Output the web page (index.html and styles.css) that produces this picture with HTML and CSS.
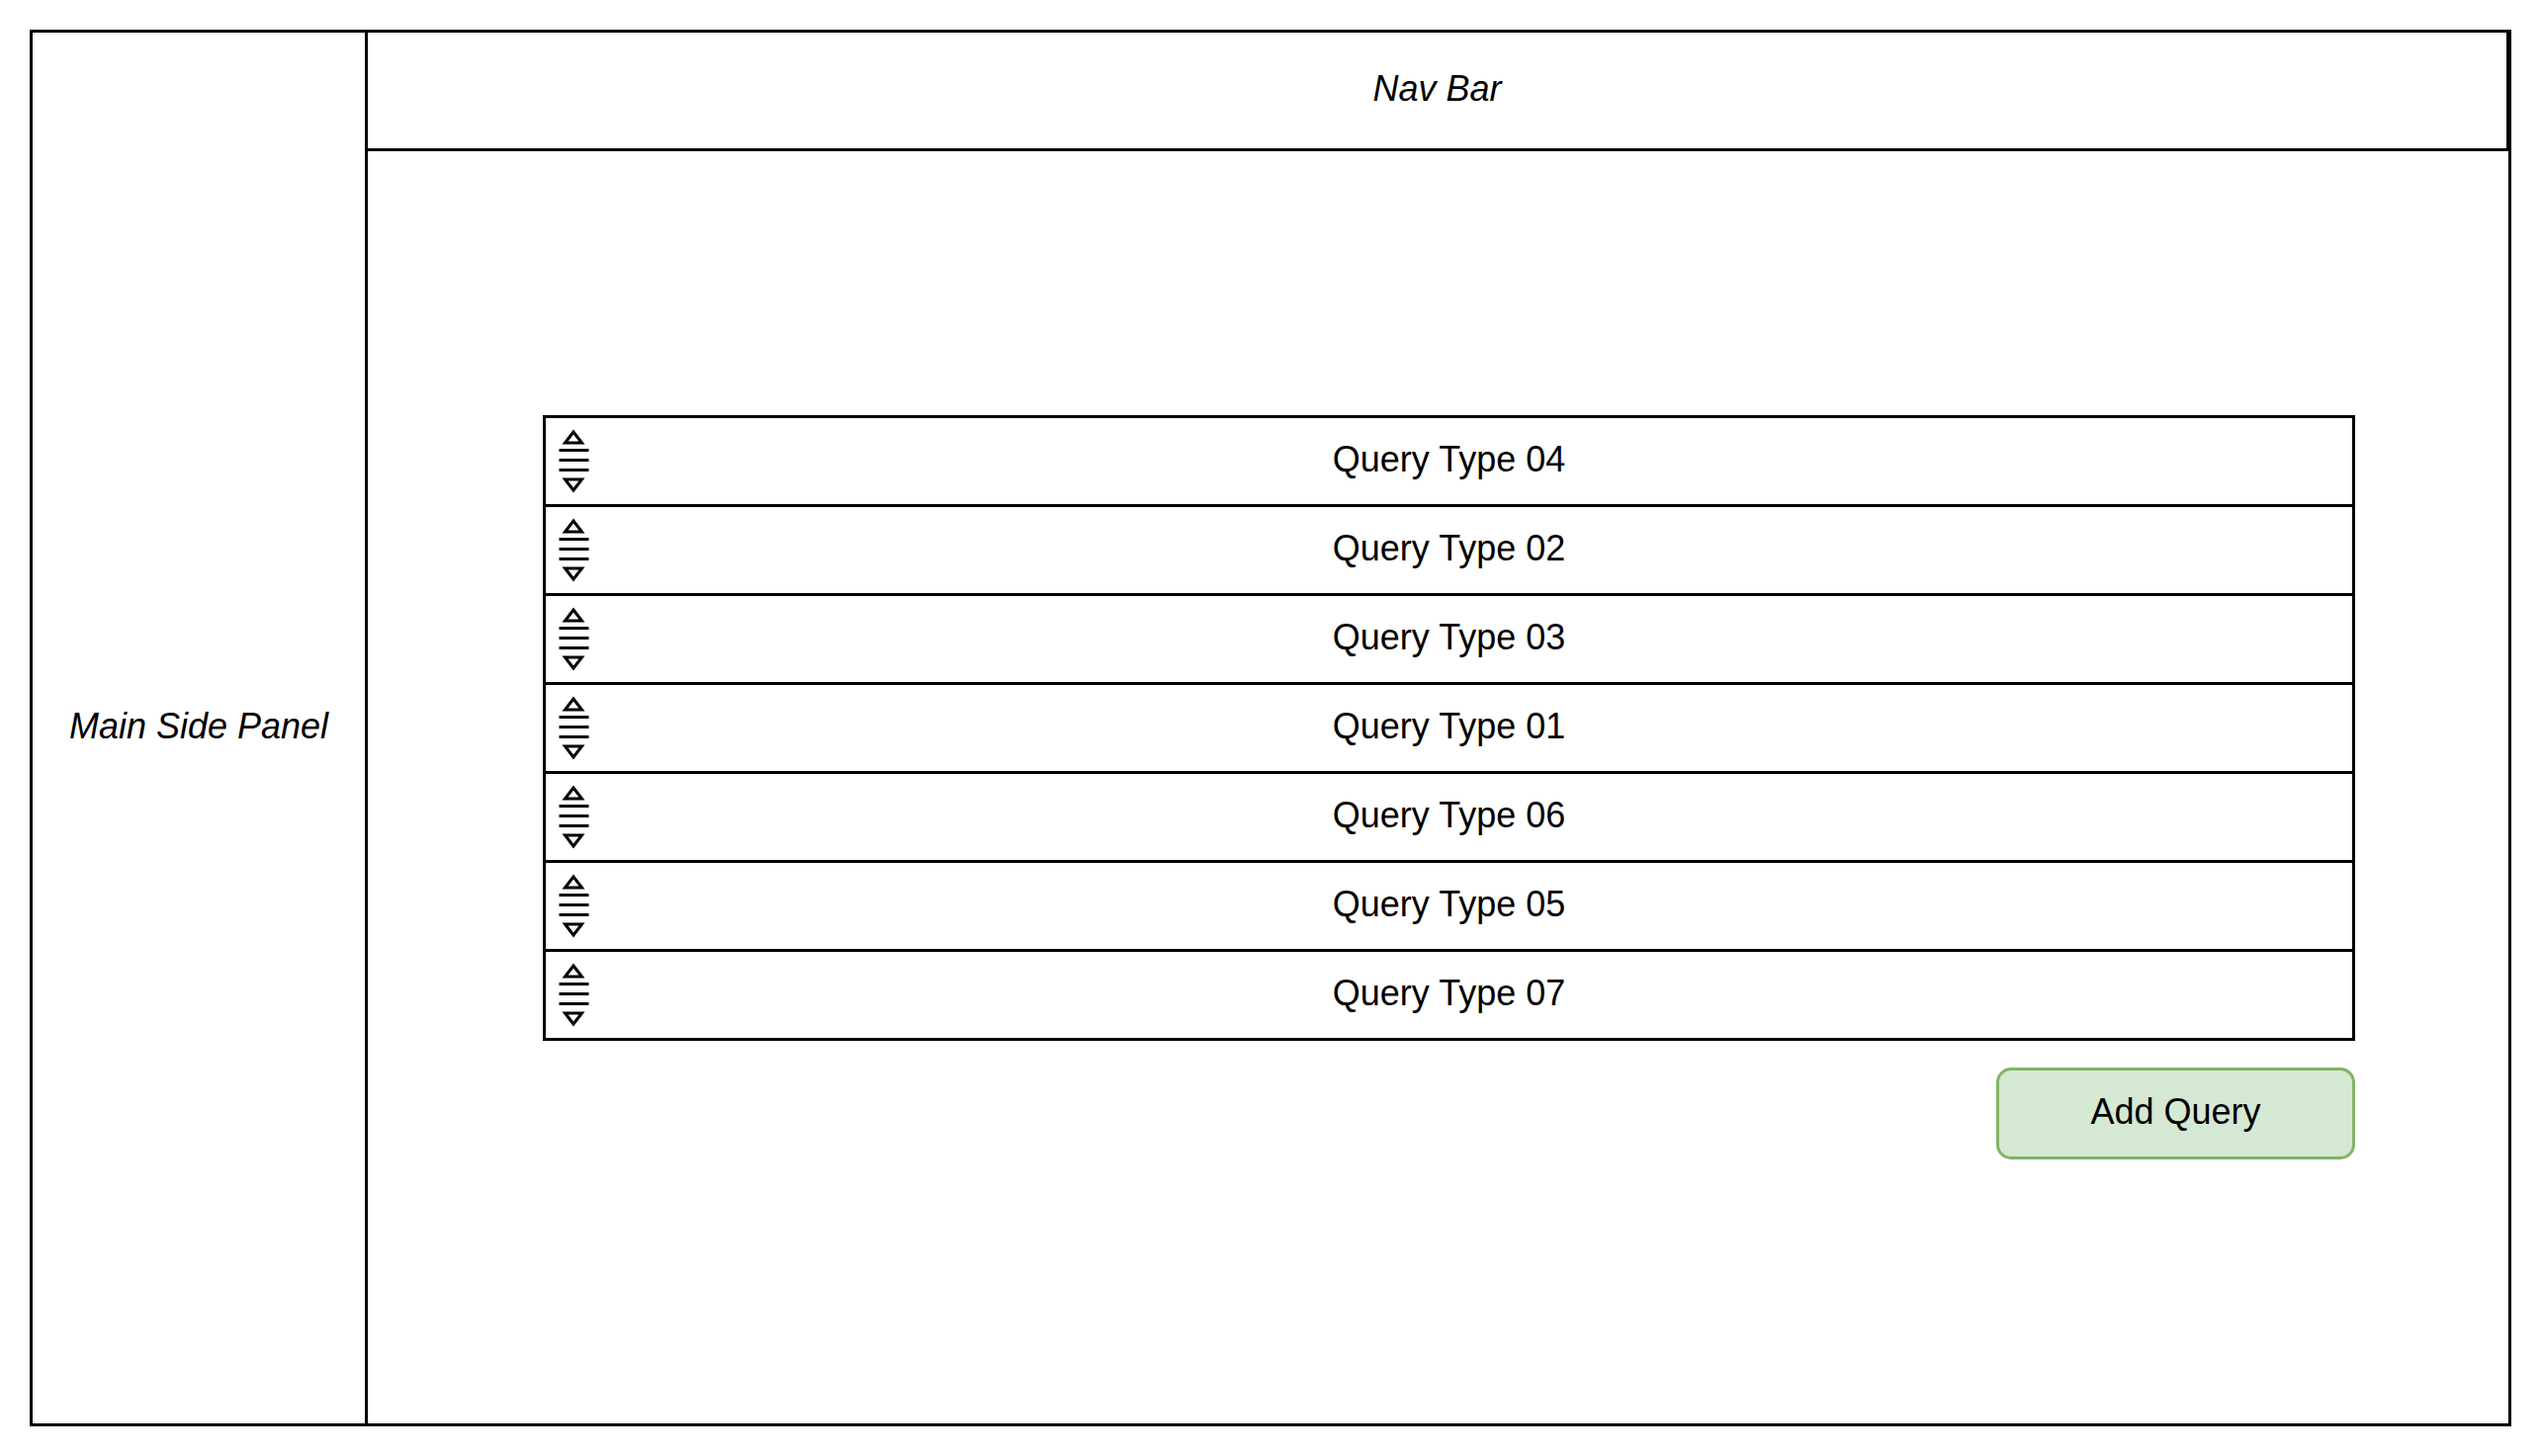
FILE: index.html
```html
<!DOCTYPE html>
<html lang="en">
<head>
<meta charset="utf-8">
<title>Queries</title>
<link rel="stylesheet" href="styles.css">
</head>
<body>
<svg class="sprite">
  <symbol id="grip" viewBox="0 0 31 65">
    <path d="M15 3 L6.500 14 H23.500 Z M15 62 L6.500 51 H23.500 Z M0.500 21.500 H30.500 M0.500 31.500 H30.500 M0.500 41.500 H30.500" fill="none" stroke="#000" stroke-width="3"/>
  </symbol>
</svg>
<div class="frame">
  <aside class="side"><span class="label">Main Side Panel</span></aside>
  <div class="page">
    <nav class="nav"><span class="label">Nav Bar</span></nav>
    <main class="content">
      <ul class="queries">
        <li class="query"><button class="handle" aria-label="Reorder Query Type 04"><svg class="grip"><use href="#grip"/></svg></button><span class="label">Query Type 04</span></li>
        <li class="query"><button class="handle" aria-label="Reorder Query Type 02"><svg class="grip"><use href="#grip"/></svg></button><span class="label">Query Type 02</span></li>
        <li class="query"><button class="handle" aria-label="Reorder Query Type 03"><svg class="grip"><use href="#grip"/></svg></button><span class="label">Query Type 03</span></li>
        <li class="query"><button class="handle" aria-label="Reorder Query Type 01"><svg class="grip"><use href="#grip"/></svg></button><span class="label">Query Type 01</span></li>
        <li class="query"><button class="handle" aria-label="Reorder Query Type 06"><svg class="grip"><use href="#grip"/></svg></button><span class="label">Query Type 06</span></li>
        <li class="query"><button class="handle" aria-label="Reorder Query Type 05"><svg class="grip"><use href="#grip"/></svg></button><span class="label">Query Type 05</span></li>
        <li class="query"><button class="handle" aria-label="Reorder Query Type 07"><svg class="grip"><use href="#grip"/></svg></button><span class="label">Query Type 07</span></li>
      </ul>
      <button class="add"><span class="label">Add Query</span></button>
    </main>
  </div>
</div>
</body>
</html>
```
FILE: styles.css
```css
* {
  box-sizing: border-box;
}

body {
  display: flex;
  min-height: 100vh;
  margin: 0;
  padding: 30px 31px 30px 30px;
  background: #fff;
  color: #000;
  font: 36px/40px "Liberation Sans", Arial, sans-serif;
}

.sprite {
  display: none;
}

.frame {
  display: flex;
  flex: 1;
  border: 3px solid #000;
}

.side {
  display: flex;
  flex: 0 0 339px;
  align-items: center;
  justify-content: center;
  border-right: 3px solid #000;
  font-style: italic;
}

.label {
  display: block;
  padding-bottom: 4px;
  white-space: nowrap;
}

.page {
  display: flex;
  flex: 1;
  flex-direction: column;
  min-width: 0;
}

.nav {
  display: flex;
  align-items: center;
  justify-content: center;
  min-height: 120px;
  border-right: 2px solid #000;
  border-bottom: 3px solid #000;
  font-style: italic;
}

.content {
  display: flex;
  flex: 1;
  flex-direction: column;
  gap: 27px;
  padding: 267px 155px 30px 177px;
}

.queries {
  margin: 0;
  padding: 0;
  border: 3px solid #000;
  list-style: none;
}

.query {
  display: grid;
  grid-template-columns: 1fr auto 1fr;
  align-items: center;
  min-height: 87px;
  padding: 0 13px;
}

.query + .query {
  min-height: 90px;
  border-top: 3px solid #000;
}

.handle {
  justify-self: start;
  padding: 0;
  border: 0;
  background: none;
  cursor: grab;
}

.grip {
  display: block;
  width: 31px;
  height: 65px;
}

.add {
  display: flex;
  align-items: center;
  justify-content: center;
  align-self: flex-end;
  width: 363px;
  min-height: 93px;
  border: 3px solid #82b366;
  border-radius: 15px;
  background: #d5e8d4;
  color: inherit;
  font: inherit;
  cursor: pointer;
}
```
